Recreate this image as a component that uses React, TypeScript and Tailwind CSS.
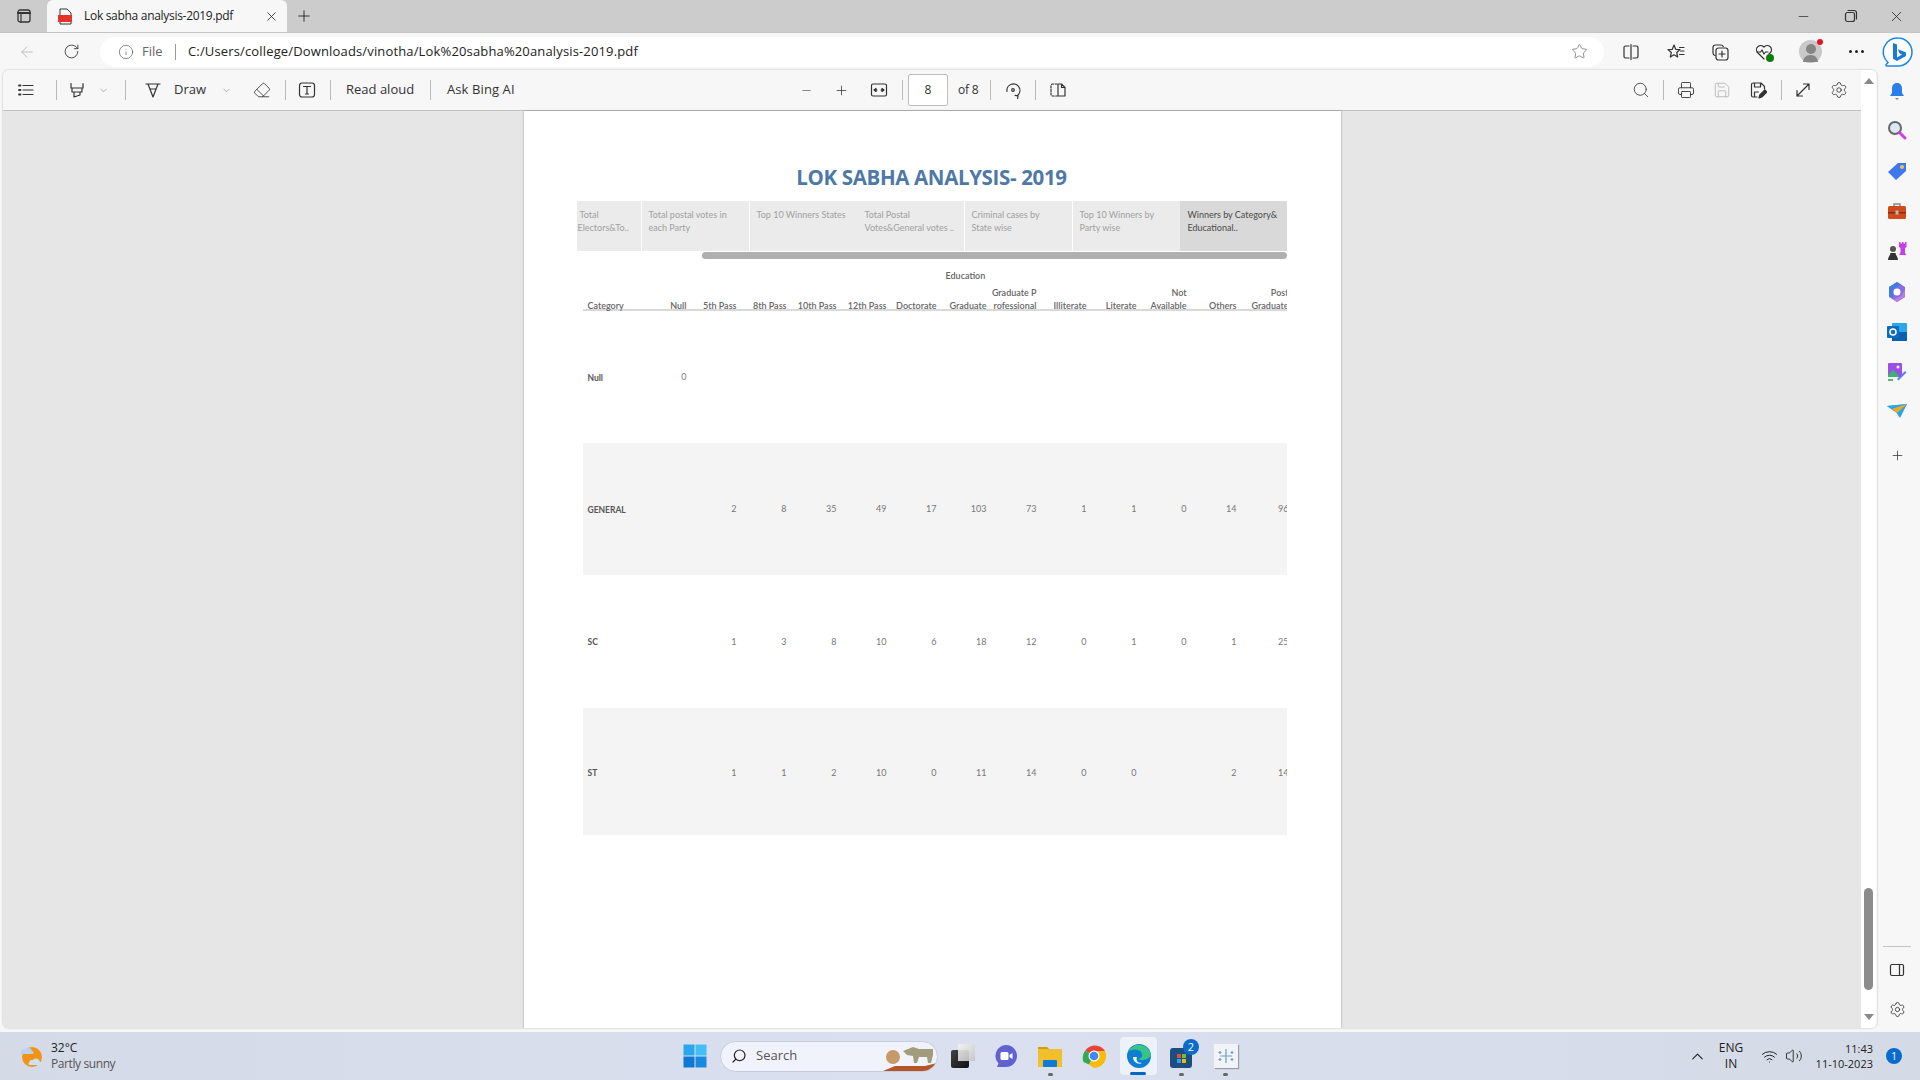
import React from "react";
import { ArrowLeft, ChevronDown, ChevronUp, Eraser, Info, Minus, Plus, Printer, RotateCw, Save, Search, Settings, Star, Volume2, Wifi, X } from "lucide-react";

const Sep = ({ c }: { c: string }) => <div className={`w-px h-5 bg-[#b9b9b9] shrink-0 ${c}`} />;
const S = ({ children, c = "", w = 20, h = 20, vb = "0 0 20 20" }: { children: React.ReactNode; c?: string; w?: number; h?: number; vb?: string }) => (
  <svg width={w} height={h} viewBox={vb} fill="none" stroke="#333" strokeWidth="1.2" strokeLinecap="round" strokeLinejoin="round" className={`shrink-0 ${c}`}>{children}</svg>
);

const cols = "grid grid-cols-[67px_37px_repeat(11,50px)_52px] w-[706px]";
const headers: [string, string?][] = [["Null"], ["5th Pass"], ["8th Pass"], ["10th Pass"], ["12th Pass"], ["Doctorate"], ["Graduate"], ["Graduate P", "rofessional"], ["Illiterate"], ["Literate"], ["Not", "Available"], ["Others"], ["Post", "Graduate"]];
const rows: { label: string; v: string[]; bg: string; h: string }[] = [
  { label: "Null", v: ["0", "", "", "", "", "", "", "", "", "", "", "", ""], bg: "", h: "h-[132px]" },
  { label: "GENERAL", v: ["", "2", "8", "35", "49", "17", "103", "73", "1", "1", "0", "14", "96"], bg: "bg-[#f4f4f4]", h: "h-[132px]" },
  { label: "SC", v: ["", "1", "3", "8", "10", "6", "18", "12", "0", "1", "0", "1", "25"], bg: "", h: "h-[133px]" },
  { label: "ST", v: ["", "1", "1", "2", "10", "0", "11", "14", "0", "0", "", "2", "14"], bg: "bg-[#f4f4f4]", h: "h-[127px] pt-[2px]" },
];
const tabs: { lines: string[]; c: string; pl: string }[] = [
  { lines: ["\u00a0Total", "Electors&To.."], c: "w-[64px]", pl: "pl-[1px]" },
  { lines: ["Total postal votes in", "each Party"], c: "w-[107px] ml-px", pl: "pl-[7px]" },
  { lines: ["Top 10 Winners States"], c: "w-[108px] ml-px", pl: "pl-[7px]" },
  { lines: ["Total Postal", "Votes&General votes .."], c: "w-[106px]", pl: "pl-[7px]" },
  { lines: ["Criminal cases by", "State wise"], c: "w-[107px] ml-px", pl: "pl-[7px]" },
  { lines: ["Top 10 Winners by", "Party wise"], c: "w-[107px] ml-px", pl: "pl-[7px]" },
];

function Paper() {
  return (
    <div className="w-[817px] h-full bg-white shadow-[0_0_2px_rgba(0,0,0,0.35)] pl-[53px] pt-[51px] font-['Lato',sans-serif] overflow-hidden">
      <div className="w-[710px] h-[30px] leading-[30px] text-center text-[20.5px] font-bold text-[#4e79a7] font-['Open_Sans',sans-serif] tracking-[-0.35px]">LOK SABHA ANALYSIS- 2019</div>
      <div className="flex w-[710px] h-[50px] mt-[9px]">
        {tabs.map((t) => (
          <div key={t.lines[1] ?? t.lines[0]} className={`${t.c} ${t.pl} bg-[#ebebeb] text-[#a0a0a0] text-[9px] leading-[13px] pt-[7px] whitespace-nowrap overflow-hidden`}>
            {t.lines.map((l) => <div key={l}>{l}</div>)}
          </div>
        ))}
        <div className="w-[107px] pl-[8px] bg-[#d9d9d9] text-[#4a4a4a] text-[9px] leading-[13px] pt-[7px] whitespace-nowrap overflow-hidden">
          <div>Winners by Category&amp;</div>
          <div>Educational..</div>
        </div>
      </div>
      <div className="h-[7px] mt-px ml-[125px] w-[585px] bg-[#b0b0b0] rounded-full" />
      <div className="ml-[6px] w-[704px] mt-[10px] overflow-hidden">
        <div className="h-[13px] leading-[13px] text-[9px] text-[#666] pl-[363px] font-semibold">Education</div>
        <div className={`${cols} h-[26px] border-b-2 border-[#d9d9d9] mt-[3px] text-[9px] leading-[13px] text-[#666] font-semibold`}>
          <div className="self-end pl-[5px] -mb-[3px]">Category</div>
          {headers.map(([a, b]) => (
            <div key={a} className="self-end -mb-[3px] text-right whitespace-nowrap">
              {b && <div>{a}</div>}
              <div>{b ?? a}</div>
            </div>
          ))}
        </div>
        {rows.map((r) => (
          <div key={r.label} className={`${cols} ${r.h} ${r.bg} items-center text-[9px]`}>
            <div className="pl-[5px] pt-[2px] text-[#555] font-bold text-[8.5px]">{r.label}</div>
            {r.v.map((v, i) => <div key={i} className="text-right text-[#777]">{v}</div>)}
          </div>
        ))}
      </div>
    </div>
  );
}

function Bing({ c }: { c: string }) {
  return (
    <svg width="32" height="32" viewBox="0 0 32 32" className={`shrink-0 ${c}`}>
      <path d="M16 2a14 14 0 0 1 14 14c0 7.7-6.3 14-14 14H5c-1 0-1.4-1-.7-1.7L6 26.5A14 14 0 0 1 16 2z" fill="#fff" stroke="#1b87e8" strokeWidth="1.5" />
      <path d="M11 7l4 1.5v13l5-3-2.6-1.2-1.4-4 8 3.2v3.4L15 25l-4-2.2z" fill="#1a78d8" />
    </svg>
  );
}

function Sidebar() {
  return (
    <div className="w-[43px] h-full flex flex-col items-center shrink-0 pt-[11px] pr-[3px]">
      <svg width="20" height="20" viewBox="0 0 20 20" className="shrink-0"><path d="M10 2c3.5 0 5 2.5 5 5.5V12l2 3H3l2-3V7.5C5 4.500 6.500 2 10 2z" fill="#2b7de9" /><path d="M8 17h4l-2 2z" fill="#888" /></svg>
      <svg width="22" height="22" viewBox="0 0 22 22" className="mt-[18px] shrink-0"><circle cx="9" cy="9" r="6" fill="#dce8f2" stroke="#666" strokeWidth="2" /><path d="M13.500 13.500L19 19" stroke="#d63de0" strokeWidth="3" strokeLinecap="round" /></svg>
      <svg width="22" height="22" viewBox="0 0 22 22" className="mt-[19px] shrink-0"><path d="M2 12L12 3h8v8L10 20z" fill="#3e78f0" /><circle cx="16" cy="7" r="2" fill="#f4c542" /></svg>
      <svg width="20" height="18" viewBox="0 0 20 18" className="mt-[20px] shrink-0"><path d="M7 4V2h6v2" fill="none" stroke="#888" strokeWidth="1.500" /><rect x="1" y="4" width="18" height="13" rx="1.500" fill="#cf4a1c" /><rect x="1" y="10" width="18" height="1.500" fill="#8c2d0c" /><rect x="8.500" y="8.500" width="3" height="4" fill="#bbb" /></svg>
      <svg width="20" height="22" viewBox="0 0 20 22" className="mt-[20px] shrink-0"><path d="M12 2h1.500v1.500h1.500V2h1.500v1.500H18V2h1.500v5l-1.500 1v5l1.500 2H12l1.500-2V8L12 7z" fill="#c43fe8" /><circle cx="6" cy="9" r="3" fill="#555" /><path d="M1 20c0-3 2-4 2.500-7h5C9 16 11 17 11 20z" fill="#333" /></svg>
      <svg width="20" height="22" viewBox="0 0 20 22" className="mt-[19px] shrink-0"><path d="M10 1l8 5v10l-8 5-8-5V6z" fill="#8a6ee0" /><path d="M2 6l8-5 4 2.500L6 8v8l-4-.2z" fill="#3f7fe0" /><path d="M18 16l-8 5-4-2.500 8-3.500 4-6z" fill="#b67fe8" /><circle cx="10" cy="11" r="3.500" fill="#fff" /></svg>
      <svg width="22" height="20" viewBox="0 0 22 20" className="mt-[19px] shrink-0"><rect x="6" y="1" width="15" height="18" rx="1" fill="#28a8ea" /><path d="M6 10h15v8a1 1 0 0 1-1 1H6z" fill="#0a5fb0" /><rect x="1" y="4" width="12" height="12" rx="1" fill="#0f6cbd" /><circle cx="7" cy="10" r="3" fill="none" stroke="#fff" strokeWidth="1.500" /></svg>
      <svg width="20" height="20" viewBox="0 0 20 20" className="mt-[20px] shrink-0"><rect x="1" y="1" width="14" height="14" rx="1" fill="#9a4fe8" /><path d="M1 13l5-5 5 5v2H1z" fill="#3db26b" /><circle cx="11" cy="5" r="1.500" fill="#fff" /><path d="M10 17L18 9l1.500 1.500-8 8z" fill="#5b7ff0" /><path d="M1 18h5" stroke="#2f9c5c" strokeWidth="1.500" /></svg>
      <svg width="20" height="16" viewBox="0 0 20 16" className="mt-[21px] shrink-0"><path d="M0 3l20-2-7 14-3-5z" fill="#2aa5e8" /><path d="M0 3l10 7 2 4 8-13z" fill="#2aa5e8" /><path d="M5 6l15-5-10 9z" fill="#f2a81d" /></svg>
      <Plus size={15} strokeWidth={1.2} color="#333" className="mt-[29px] shrink-0" />
      <div className="flex-1" />
      <div className="w-[28px] h-px bg-[#c4c4c4] shrink-0" />
      <S w={16} h={16} vb="0 0 16 16" c="mt-[15px]"><rect x="1.500" y="2.500" width="13" height="11" rx="1.500" /><path d="M10.500 2.500v11" /></S>
      <Settings size={17} strokeWidth={1.2} color="#333" className="mt-[23px] mb-[14px] shrink-0" />
    </div>
  );
}

function PdfToolbar() {
  return (
    <div className="h-[41px] bg-[#f7f7f7] border-b border-[#c2c2c2] flex items-center shrink-0 text-[13px] text-[#333] whitespace-nowrap">
      <S w={18} h={18} c="ml-[14px]" vb="0 0 18 18"><path d="M6 4.500h10M6 9h10M6 13.500h10" /><path d="M2 4.500h1.500M2 9h1.500M2 13.500h1.500" strokeWidth="1.800" /></S>
      <Sep c="ml-[21px]" />
      <S w={18} h={18} c="ml-[11px]" vb="0 0 18 18"><path d="M3 2.500v4.500h12V2.500M4 7v4h10V7M6 11v5l6-2v-3" /></S>
      <ChevronDown size={11} strokeWidth={1.2} color="#777" className="ml-[12px] shrink-0" />
      <Sep c="ml-[16px]" />
      <S w={18} h={18} c="ml-[18px]" vb="0 0 18 18"><path d="M2 3h14M4 3l5 13 5-13M6.500 8h5" /></S>
      <span className="ml-[12px] w-[32px] shrink-0">Draw</span>
      <ChevronDown size={11} strokeWidth={1.2} color="#777" className="ml-[15px] shrink-0" />
      <Eraser size={18} strokeWidth={1.1} color="#333" className="ml-[21px] shrink-0" />
      <Sep c="ml-[14px]" />
      <S w={18} h={18} c="ml-[12px]" vb="0 0 18 18"><rect x="1.500" y="2" width="15" height="14" rx="2.500" /><path d="M5.500 5.500h7M9 5.500v7.500M7.500 13h3" /></S>
      <Sep c="ml-[14px]" />
      <span className="ml-[15px] w-[70px] shrink-0">Read aloud</span>
      <Sep c="ml-[14px]" />
      <span className="ml-[16px] w-[70px] shrink-0 tracking-[0.1px]">Ask Bing AI</span>
      <Minus size={13} strokeWidth={1.4} color="#666" className="ml-[283px] shrink-0" />
      <Plus size={15} strokeWidth={1.2} color="#333" className="ml-[21px] shrink-0" />
      <S w={18} h={18} c="ml-[21px]" vb="0 0 18 18"><rect x="1.500" y="3" width="15" height="12" rx="1.500" /><path d="M4 9h3M11 9h3M6 7.500v3L4 9zM12 7.500v3L14 9z" fill="#333" /></S>
      <Sep c="ml-[14px]" />
      <div className="ml-[5px] w-[40px] h-[32px] shrink-0 bg-white border border-[#bdbdbd] rounded-[2px] flex items-center justify-center text-[12px]">8</div>
      <span className="ml-[10px] w-[21px] shrink-0 text-[12px] tracking-[-0.2px]">of 8</span>
      <Sep c="ml-[11px]" />
      <S w={18} h={18} c="ml-[13px]" vb="0 0 18 18"><path d="M3 10.500A6.500 6.500 0 1 1 13.500 14.500" /><circle cx="9" cy="9" r="1.300" /><path d="M11 14.500h3v2.500" transform="rotate(10 12 15)" /></S>
      <Sep c="ml-[13px]" />
      <S w={18} h={18} c="ml-[13px]" vb="0 0 18 18"><path d="M8 3H3.500a1.500 1.500 0 0 0-1.500 1.500v9A1.500 1.500 0 0 0 3.500 15H8" strokeDasharray="2 1.500" /><path d="M9 3h3.500L16 6.500V15H9zM12.500 3v3.500H16" /></S>
      <div className="flex-1" />
      <Search size={18} strokeWidth={1.1} color="#333" className="shrink-0" />
      <Sep c="ml-[13px]" />
      <Printer size={18} strokeWidth={1.2} color="#333" className="ml-[13px] shrink-0" />
      <Save size={18} strokeWidth={1.2} color="#b5b5b5" className="ml-[18px] shrink-0" />
      <S w={18} h={18} c="ml-[18px]" vb="0 0 18 18"><path d="M8 16H4a1.500 1.500 0 0 1-1.500-1.500v-11A1.500 1.500 0 0 1 4 2h8l3.500 3.500V8M5.500 2v4h6V2M5.500 16v-5h4" /><path d="M10 17l.8-3 5-5 2 2-5 5z" fill="#333" /></S>
      <Sep c="ml-[14px]" />
      <S w={18} h={18} c="ml-[12px]" vb="0 0 18 18"><path d="M3 15L15 3M9.500 3H15v5.500M3 9.500V15h5.500" /></S>
      <Settings size={18} strokeWidth={1.1} color="#333" className="ml-[18px] mr-[13px] shrink-0" />
    </div>
  );
}

function Taskbar() {
  return (
    <div className="h-12 shrink-0 flex items-center bg-gradient-to-r from-[#d4dbe7] via-[#dae0f0] to-[#d4dbe6] text-[12px] text-[#222] whitespace-nowrap relative">
      <svg width="26" height="26" viewBox="0 0 26 26" className="ml-[19px] shrink-0">
        <circle cx="13" cy="14" r="10" fill="#f29318" />
        <path d="M2 9a3 3 0 0 1 4-3 4 4 0 0 1 7 2c2 0 2 3 0 3H3C1 11 1 9 2 9z" fill="#bcd3ee" />
        <path d="M10 20a3 3 0 0 1 4-3 4 4 0 0 1 7 2c3 0 3 3 0 3H11c-2 0-2-2-1-2z" fill="#cfe0f4" />
      </svg>
      <div className="ml-[6px] w-[80px] shrink-0 leading-[16px]">
        <div>32°C</div>
        <div className="text-[#555] tracking-[-0.4px]">Partly sunny</div>
      </div>
      <svg width="24" height="24" viewBox="0 0 24 24" className="ml-[552px] shrink-0">
        <rect x="0.500" y="0.500" width="11" height="11" fill="#2aa7ee" /><rect x="12.500" y="0.500" width="11" height="11" fill="#42c0f5" /><rect x="0.500" y="12.500" width="11" height="11" fill="#0f78d4" /><rect x="12.500" y="12.500" width="11" height="11" fill="#1a8ae0" />
      </svg>
      <div className="ml-[13px] w-[218px] h-[31px] shrink-0 rounded-full bg-[#f0f3fb] border border-[#c6cde0] flex items-center overflow-hidden text-[13px] text-[#555]">
        <Search size={16} strokeWidth={1.8} color="#222" className="ml-[10px] -scale-x-100 shrink-0" />
        <span className="ml-[9px]">Search</span>
        <svg width="54" height="30" viewBox="0 0 54 30" className="ml-[86px] shrink-0">
          <path d="M0 30l12-5h30l12-3v8z" fill="#b4562a" />
          <circle cx="10" cy="16" r="7" fill="#c79a6a" />
          <path d="M20 10l10-4 6 2 14 0 0 6-2 8h-3l-1-6-8 0-2 6h-3l-1-7-6-1z" fill="#a39c7c" />
        </svg>
      </div>
      <div className="ml-[13px] w-[24px] h-[24px] shrink-0 flex items-end justify-start relative">
        <div className="w-[18px] h-[18px] rounded-[2px] bg-gradient-to-br from-[#444] to-[#111]" />
        <div className="absolute top-0 right-0 w-[17px] h-[17px] bg-gradient-to-br from-[#f5f5f5] to-[#c4c4c4] opacity-90" />
      </div>
      <svg width="24" height="24" viewBox="0 0 24 24" className="ml-[19px] shrink-0"><path d="M12 1a11 11 0 0 1 0 22H3l1.500-3.500A11 11 0 0 1 12 1z" fill="#5f62cf" /><rect x="6.500" y="8" width="8" height="8" rx="1.500" fill="#fff" /><path d="M15.500 11l3-2v6l-3-2z" fill="#fff" /></svg>
      <div className="ml-[20px] w-[24px] h-[24px] shrink-0 relative">
        <svg width="24" height="24" viewBox="0 0 24 24"><path d="M0 3h9l2 2h13v18H0z" fill="#f0c02c" /><path d="M0 3h9l2 2H0z" fill="#d39c10" /><rect x="5" y="16" width="14" height="7" rx="1" fill="#0f7ad4" /></svg>
        <div className="absolute top-[29px] left-[10px] w-[5px] h-[3px] rounded-full bg-[#666]" />
      </div>
      <svg width="24" height="24" viewBox="0 0 24 24" className="ml-[20px] shrink-0">
        <path d="M12 12L3.300 6.500A12 12 0 0 1 23 7H12z" fill="#ea4335" />
        <path d="M12 12l-5 8.500L1.500 18A12 12 0 0 1 3.300 6.500z" fill="#34a853" />
        <path d="M12 7h11A12 12 0 0 1 12 24l-5-3.500 5-8.500z" fill="#fbbc05" />
        <circle cx="12" cy="12" r="5.500" fill="#fff" /><circle cx="12" cy="12" r="4.300" fill="#4285f4" />
      </svg>
      <div className="ml-[14px] w-[37px] h-[38px] shrink-0 rounded-[4px] bg-[#edf1fa] flex items-center justify-center relative">
        <svg width="24" height="24" viewBox="0 0 24 24"><circle cx="12" cy="12" r="12" fill="#0d7fd2" /><path d="M24 12a12 12 0 0 0-23-4c3-3 12-4 14 2 1 3-2 5-4 5 3 2 9 1 13-3z" fill="#37c587" /><path d="M6 13c0 5 5 8 9 6-5 0-6-3-5-6z" fill="#eef3fb" /></svg>
        <div className="absolute bottom-0 left-[10px] w-[16px] h-[3px] rounded-full bg-[#0067c0]" />
      </div>
      <div className="ml-[13px] w-[24px] h-[24px] shrink-0 relative">
        <svg width="24" height="24" viewBox="0 0 24 24"><rect x="0" y="4" width="22" height="20" rx="3" fill="#1e4e80" /><rect x="7" y="10" width="4" height="4" fill="#e74c2c" /><rect x="12" y="10" width="4" height="4" fill="#6cc04a" /><rect x="7" y="15" width="4" height="4" fill="#2aa3e8" /><rect x="12" y="15" width="4" height="4" fill="#f7b500" /></svg>
        <div className="absolute -top-[5px] left-[13px] w-[16px] h-[16px] rounded-full bg-[#0b6bcb] text-white text-[11px] leading-[16px] text-center font-['Open_Sans',sans-serif]">2</div>
        <div className="absolute top-[29px] left-[9px] w-[5px] h-[3px] rounded-full bg-[#666]" />
      </div>
      <div className="ml-[20px] w-[24px] h-[24px] shrink-0 relative bg-[#f1f3f6] shadow-[1px_1px_1px_rgba(0,0,0,0.3)]">
        <svg width="24" height="24" viewBox="0 0 24 24" stroke="#6fa0c4" strokeWidth="1.200"><path d="M12 5v14M6 12h12M6 7v3M4.500 8.500h3M18 7v3M16.500 8.500h3M6 14v3M4.500 15.500h3M18 14v3M16.500 15.500h3" /></svg>
        <div className="absolute top-[29px] left-[9px] w-[5px] h-[3px] rounded-full bg-[#666]" />
      </div>
      <ChevronUp size={19} strokeWidth={1.4} color="#222" className="ml-[450px] shrink-0" />
      <div className="ml-[9px] w-[30px] text-center leading-[16px] shrink-0"><div>ENG</div><div>IN</div></div>
      <Wifi size={17} strokeWidth={1.4} color="#222" className="ml-[15px] shrink-0" />
      <Volume2 size={18} strokeWidth={1.2} color="#222" className="ml-[7px] shrink-0" />
      <div className="ml-[10px] w-[60px] text-right leading-[15px] shrink-0 text-[11px]"><div>11:43</div><div>11-10-2023</div></div>
      <div className="ml-[13px] w-[16px] h-[16px] rounded-full bg-[#0b6bcb] text-white text-[10px] leading-[16px] text-center shrink-0">1</div>
    </div>
  );
}

export default function App() {
  return (
    <div className="w-[1920px] h-[1080px] flex flex-col overflow-hidden bg-[#f7f7f7] font-['Open_Sans',sans-serif]">
      <div className="h-8 bg-[#cccccc] flex items-end shrink-0 text-[#222]">
        <S w={16} h={16} vb="0 0 16 16" c="ml-[16px] mb-[8px]" ><rect x="2" y="2" width="12" height="12" rx="2" strokeWidth="1.300" /><path d="M2 5h12" strokeWidth="2" /><path d="M5 5v9" /></S>
        <div className="ml-[15px] w-[240px] h-[32px] bg-[#f7f7f7] rounded-t-[6px] flex items-center shrink-0 text-[12px] text-[#222] whitespace-nowrap">
          <svg width="16" height="17" viewBox="0 0 16 17" className="ml-[10px] shrink-0"><path d="M3 1h7l4 4v11H3z" fill="#fff" stroke="#333" strokeWidth="1" /><rect x="1" y="7" width="14" height="7" fill="#e6332a" /></svg>
          <span className="ml-[11px] w-[150px] tracking-[-0.3px]">Lok sabha analysis-2019.pdf</span>
          <X size={15} strokeWidth={1.3} color="#222" className="ml-[30px] shrink-0" />
        </div>
        <Plus size={18} strokeWidth={1.2} color="#222" className="ml-[8px] mb-[7px] shrink-0" />
        <div className="flex-1" />
        <Minus size={15} strokeWidth={1.1} color="#222" className="mb-[8px] shrink-0" />
        <S w={14} h={14} vb="0 0 14 14" c="ml-[33px] mb-[9px]"><rect x="1.500" y="3.500" width="9" height="9" rx="2" /><path d="M4 1.500h6a2.500 2.500 0 0 1 2.500 2.500v6" /></S>
        <X size={17} strokeWidth={1.1} color="#222" className="ml-[30px] mr-[15px] mb-[7px] shrink-0" />
      </div>

      <div className="h-[38px] flex items-center shrink-0 border-t border-[#c4c4c4]">
        <ArrowLeft size={18} strokeWidth={1.1} color="#b4b4b4" className="ml-[18px] shrink-0" />
        <RotateCw size={17} strokeWidth={1.2} color="#333" className="ml-[27px] shrink-0" />
        <div className="ml-[20px] w-[1504px] h-[30px] rounded-full bg-white flex items-center shrink-0 text-[13px] whitespace-nowrap">
          <Info size={16} strokeWidth={1} color="#555" className="ml-[18px] shrink-0" />
          <span className="ml-[8px] w-[23px] text-[#666] shrink-0">File</span>
          <div className="ml-[10px] w-px h-[16px] bg-[#999] shrink-0" />
          <span className="ml-[12px] w-[450px] text-[#222] tracking-[0.15px] shrink-0">C:/Users/college/Downloads/vinotha/Lok%20sabha%20analysis-2019.pdf</span>
          <div className="flex-1" />
          <Star size={17} strokeWidth={1} color="#666" className="mr-[16px] shrink-0" />
        </div>
        <S w={18} h={18} vb="0 0 18 18" c="ml-[18px]"><path d="M7 3H3.500A1.500 1.500 0 0 0 2 4.500v9A1.500 1.500 0 0 0 3.500 15H7M11 3h3.500A1.500 1.500 0 0 1 16 4.500v9a1.500 1.500 0 0 1-1.500 1.500H11M9 1.500v15" /></S>
        <S w={18} h={18} vb="0 0 18 18" c="ml-[27px]"><path d="M7 2l1.700 4.300 4.300.3-3.300 2.900 1 4.500L7 11.800l-3.700 2.200 1-4.500L1 6.600l4.300-.3z" /><path d="M12.500 4.500h4.500M13.500 8h3.500M12.500 11.500h4.500" /></S>
        <S w={18} h={18} vb="0 0 18 18" c="ml-[26px]"><path d="M4 12.500C2.500 12 2 11 2 10V4.500C2 3 3 2 4.500 2H10c1.300 0 2 .8 2.300 1.500" /><rect x="5" y="5" width="12" height="12" rx="2.500" /><path d="M11 8v6M8 11h6" /></S>
        <div className="ml-[26px] w-[18px] h-[18px] shrink-0 relative">
          <S w={18} h={18} vb="0 0 18 18"><path d="M9 16L2.500 9.500A4.200 4.200 0 0 1 9 4a4.200 4.200 0 0 1 6.500 5.500L14 11" /><path d="M2 9h3.500l1.500-2 2 4 1.500-2H13" /></S>
          <div className="absolute -right-[1px] -bottom-[1px] w-[8px] h-[8px] rounded-full bg-[#107c10]" />
        </div>
        <div className="ml-[26px] w-[23px] h-[23px] rounded-full bg-[#c9c9c9] shrink-0 relative overflow-visible">
          <div className="absolute top-[4px] left-[6.500px] w-[10px] h-[10px] rounded-full bg-[#858585]" />
          <div className="absolute bottom-[1px] left-[4px] w-[15px] h-[7px] rounded-t-full bg-[#858585]" />
          <div className="absolute -top-[1px] right-[-1px] w-[6px] h-[6px] rounded-full bg-[#e81123]" />
        </div>
        <div className="ml-[27px] flex gap-[3px] shrink-0">
          <div className="w-[3px] h-[3px] rounded-full bg-[#222]" />
          <div className="w-[3px] h-[3px] rounded-full bg-[#222]" />
          <div className="w-[3px] h-[3px] rounded-full bg-[#222]" />
        </div>
        <Bing c="ml-[18px]" />
      </div>

      <div className="flex-1 flex min-h-0">
        <div className="w-[1877px] pl-[3px] pb-[4px] shrink-0">
          <div className="h-full flex rounded-t-[6px] rounded-b-[6px] overflow-hidden shadow-[0_0_2px_rgba(0,0,0,0.3)]">
            <div className="w-[1858px] flex flex-col shrink-0">
              <PdfToolbar />
              <div className="flex-1 min-h-0 bg-[#e6e6e6] flex justify-center"><Paper /></div>
            </div>
            <div className="w-[15px] bg-white flex flex-col items-center shrink-0">
              <div className="mt-[8px] w-0 h-0 border-x-[5px] border-x-transparent border-b-[6px] border-b-[#8a8a8a]" />
              <div className="flex-1" />
              <div className="w-[9px] h-[102px] rounded-full bg-[#8c8c8c]" />
              <div className="mt-[24px] mb-[8px] w-0 h-0 border-x-[5px] border-x-transparent border-t-[6px] border-t-[#8a8a8a]" />
            </div>
          </div>
        </div>
        <Sidebar />
      </div>

      <Taskbar />
    </div>
  );
}
